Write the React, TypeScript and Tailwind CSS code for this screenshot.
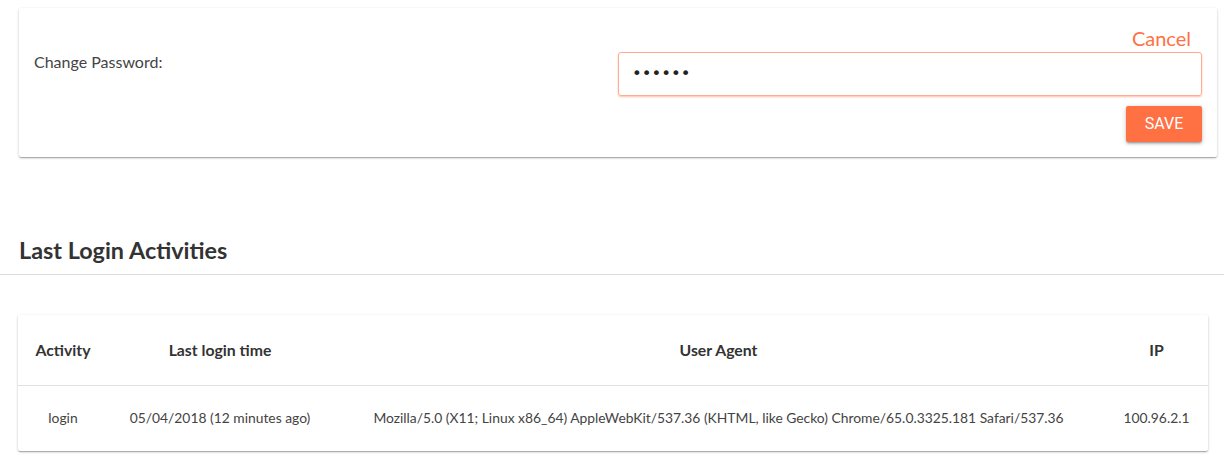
import React from "react";

const paper =
  "bg-white shadow-[0px_1px_3px_0px_rgba(0,0,0,0.2),0px_1px_1px_0px_rgba(0,0,0,0.14),0px_2px_1px_-1px_rgba(0,0,0,0.12)] rounded-[2px]";

export default function App() {
  const ua =
    "Mozilla/5.0 (X11; Linux x86_64) AppleWebKit/537.36 (KHTML, like Gecko) Chrome/65.0.3325.181 Safari/537.36";
  return (
    <div className="w-[1224px] h-[456px] bg-white font-['Lato',sans-serif] text-[#333] pt-[8px] overflow-hidden">
      {/* Change password card */}
      <div className={`${paper} ml-[19px] mr-[7px] h-[149px] flex px-[15px]`}>
        <div className="flex-1 pt-[42px]">
          <div className="text-[16px] leading-[24px] text-[#444]">Change Password:</div>
        </div>
        <div className="flex-1 flex flex-col items-end pt-[18px]">
          <button className="text-[20px] leading-[24px] text-[#ff7043] pr-[11px]">Cancel</button>
          <div className="mt-[2px] w-full h-[44px] rounded-[3px] border border-[#ffab91] shadow-[0_1px_2px_rgba(255,112,67,0.45)] flex items-center pl-[13px]">
            <span className="text-[#222] text-[16.5px] leading-[20px] font-['DejaVu_Sans',sans-serif]">••••••</span>
          </div>
          <button className="mt-[10px] w-[76px] h-[36px] bg-[#ff7043] text-white text-[16px] font-['Roboto',sans-serif] rounded-[2px] shadow-[0px_1px_5px_0px_rgba(0,0,0,0.2),0px_2px_2px_0px_rgba(0,0,0,0.14),0px_3px_1px_-2px_rgba(0,0,0,0.12)]">
            SAVE
          </button>
        </div>
      </div>

      {/* Heading */}
      <div className="mt-[78px] pl-[19px] border-b border-[#dddddd] h-[40px]">
        <h2 className="text-[23.4px] leading-[30px] font-bold text-[#333]">Last Login Activities</h2>
      </div>

      {/* Table card */}
      <div className={`${paper} mt-[40px] ml-[18px] mr-[16px]`}>
        <div className="grid grid-cols-[90px_224px_1fr_103px] h-[71px] pt-[0px] items-center border-b border-[#e0e0e0] text-[15.8px] font-bold text-[#333] text-center">
          <div>Activity</div>
          <div>Last login time</div>
          <div>User Agent</div>
          <div>IP</div>
        </div>
        <div className="grid grid-cols-[90px_224px_1fr_103px] h-[65px] pt-[0px] items-center text-[13.85px] text-[#444] text-center">
          <div>login</div>
          <div>05/04/2018 (12 minutes ago)</div>
          <div>{ua}</div>
          <div>100.96.2.1</div>
        </div>
      </div>
    </div>
  );
}
